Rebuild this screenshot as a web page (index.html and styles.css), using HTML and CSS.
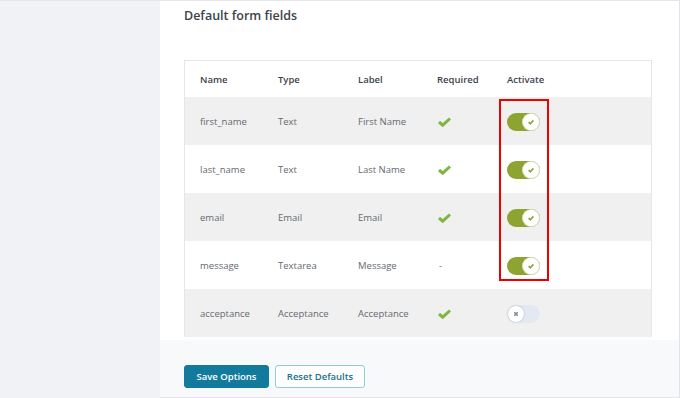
FILE: index.html
```html
<!DOCTYPE html>
<html lang="en">
<head>
<meta charset="utf-8">
<title>Default form fields</title>
<link rel="stylesheet" href="styles.css">
</head>
<body>
<div class="page">
  <aside class="sidebar"></aside>
  <main class="panel">
    <section class="content">
      <h2 class="title">Default form fields</h2>
      <div class="table-wrap">
        <div class="table">
          <div class="row head">
            <div>Name</div><div>Type</div><div>Label</div><div>Required</div><div>Activate</div>
          </div>
          <div class="row stripe">
            <div>first_name</div><div>Text</div><div>First Name</div>
            <div><svg class="check" viewBox="0 0 14 10"><polyline points="1.5,5 5.2,8.2 12.5,1.5"/></svg></div>
            <div><span class="toggle on"><span class="knob"><svg viewBox="0 0 8 8"><polyline points="1.6,4.2 3.3,5.8 6.4,2.4"/></svg></span></span></div>
          </div>
          <div class="row">
            <div>last_name</div><div>Text</div><div>Last Name</div>
            <div><svg class="check" viewBox="0 0 14 10"><polyline points="1.5,5 5.2,8.2 12.5,1.5"/></svg></div>
            <div><span class="toggle on"><span class="knob"><svg viewBox="0 0 8 8"><polyline points="1.6,4.2 3.3,5.8 6.4,2.4"/></svg></span></span></div>
          </div>
          <div class="row stripe">
            <div>email</div><div>Email</div><div>Email</div>
            <div><svg class="check" viewBox="0 0 14 10"><polyline points="1.5,5 5.2,8.2 12.5,1.5"/></svg></div>
            <div><span class="toggle on"><span class="knob"><svg viewBox="0 0 8 8"><polyline points="1.6,4.2 3.3,5.8 6.4,2.4"/></svg></span></span></div>
          </div>
          <div class="row">
            <div>message</div><div>Textarea</div><div>Message</div>
            <div class="dash">-</div>
            <div><span class="toggle on"><span class="knob"><svg viewBox="0 0 8 8"><polyline points="1.6,4.2 3.3,5.8 6.4,2.4"/></svg></span></span></div>
          </div>
          <div class="row stripe">
            <div>acceptance</div><div>Acceptance</div><div>Acceptance</div>
            <div><svg class="check" viewBox="0 0 14 10"><polyline points="1.5,5 5.2,8.2 12.5,1.5"/></svg></div>
            <div><span class="toggle off"><span class="knob"><svg viewBox="0 0 8 8"><path d="M2.3 2.3L5.7 5.7M5.7 2.3L2.3 5.7"/></svg></span></span></div>
          </div>
        </div>
        <div class="highlight"></div>
      </div>
    </section>
    <footer class="footer">
      <button class="btn primary">Save Options</button>
      <button class="btn secondary">Reset Defaults</button>
    </footer>
  </main>
</div>
</body>
</html>
```
FILE: styles.css
```css
html, body {
  margin: 0;
  padding: 0;
}
body {
  font-family: "Open Sans", "Noto Sans", sans-serif;
  background: #f0f2f6;
  width: 680px;
  height: 398px;
  overflow: hidden;
}
.page {
  display: flex;
  height: 398px;
  box-sizing: border-box;
  border-top: 1px solid #e4e6ea;
}
.sidebar {
  width: 160px;
  flex: none;
  background: #f0f2f6;
}
.panel {
  flex: 1;
  display: flex;
  flex-direction: column;
  background: #fff;
  border-right: 1px solid #e2e4e7;
  border-bottom: 1px solid #e2e4e7;
}
.content {
  padding: 0 27px 3px 24px;
}
.title {
  margin: 0;
  padding-top: 6px;
  height: 59px;
  box-sizing: border-box;
  font-size: 12.5px;
  line-height: 17px;
  font-weight: 600;
  color: #3c434a;
}
.table-wrap {
  position: relative;
}
.table {
  border: 1px solid #e6e6e6;
  border-bottom: none;
}
.row {
  display: grid;
  grid-template-columns: 78px 80px 79px 70px 1fr;
  padding-left: 15px;
  height: 48px;
  align-items: center;
  font-size: 9.5px;
  color: #646970;
}
.row.head {
  height: 36px;
  font-weight: 600;
  color: #3c434a;
}
.row.stripe {
  background: #f0f0f0;
}
.dash {
  padding-left: 2px;
}
.check {
  display: block;
  width: 15px;
  height: 10px;
  margin-top: 1px;
}
.check polyline {
  fill: none;
  stroke: #7cb743;
  stroke-width: 3;
  stroke-linecap: butt;
  stroke-linejoin: miter;
}
.toggle {
  display: flex;
  align-items: center;
  width: 33px;
  height: 18px;
  border-radius: 9px;
  box-sizing: border-box;
  padding: 1px;
  margin-top: 1px;
}
.toggle.on {
  background: #8da433;
  justify-content: flex-end;
}
.toggle.off {
  background: #e3e9f1;
  justify-content: flex-start;
}
.knob {
  width: 16px;
  height: 16px;
  border-radius: 50%;
  background: #fff;
  display: flex;
  align-items: center;
  justify-content: center;
}
.toggle.on .knob {
  box-shadow: 0 0 0 1px #dde4c0;
}
.toggle.off .knob {
  box-shadow: 0 0 2px rgba(60, 70, 90, 0.35);
}
.knob svg {
  width: 8px;
  height: 8px;
}
.knob polyline {
  fill: none;
  stroke: #8da433;
  stroke-width: 1.6;
}
.knob path {
  fill: none;
  stroke: #7f8898;
  stroke-width: 1.6;
}
.highlight {
  position: absolute;
  left: 315px;
  top: 39px;
  width: 50px;
  height: 182px;
  box-sizing: border-box;
  border: 2px solid #ee0000;
}
.footer {
  flex: 1;
  background: #f8f9fa;
  display: flex;
  align-items: flex-start;
  gap: 6px;
  padding: 25px 24px 0;
}
.btn {
  font-family: "Open Sans", "Noto Sans", sans-serif;
  font-size: 9.5px;
  font-weight: 600;
  height: 23px;
  border-radius: 3px;
  box-sizing: border-box;
  padding: 0;
  cursor: pointer;
}
.btn.primary {
  width: 85px;
  background: #127a9c;
  color: #fff;
  border: 1px solid #127a9c;
}
.btn.secondary {
  width: 90px;
  background: #fff;
  color: #1d6f8f;
  border: 1px solid #8fcadd;
}
```
